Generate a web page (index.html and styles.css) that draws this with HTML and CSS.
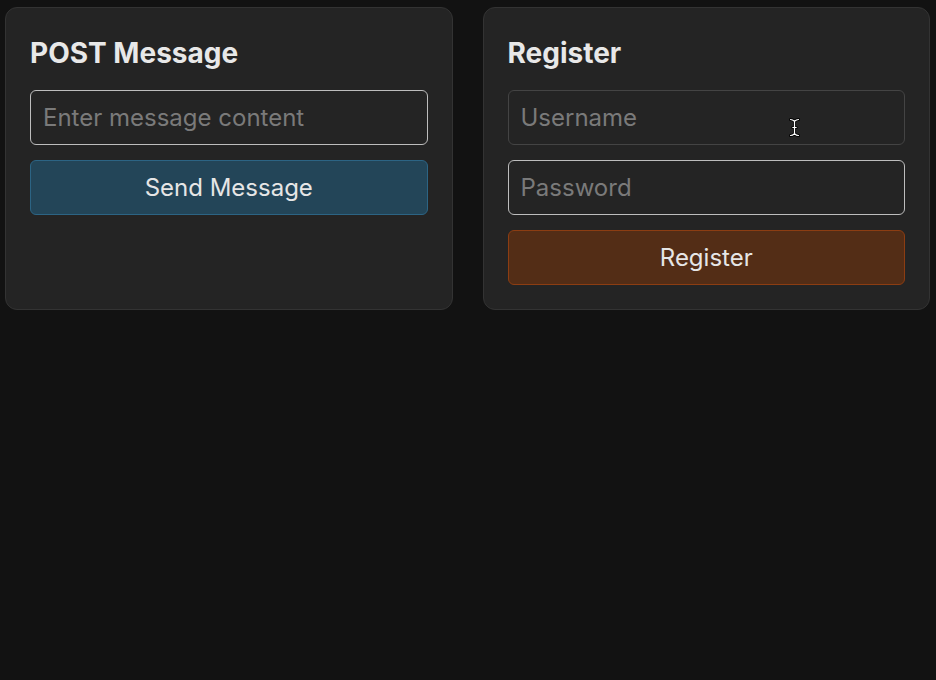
FILE: index.html
```html
<!DOCTYPE html>
<html>
<head>
<meta charset="utf-8">
<link rel="stylesheet" href="styles.css">
</head>
<body>
<div class="grid">
  <section class="card">
    <h2 class="title">POST Message</h2>
    <input class="field field-light" type="text" placeholder="Enter message content">
    <button class="btn btn-blue">Send Message</button>
  </section>
  <section class="card">
    <h2 class="title">Register</h2>
    <div class="field-wrap">
      <input class="field field-dim" type="text" placeholder="Username">
      <svg class="cursor" width="11" height="19" viewBox="0 0 11 19">
        <path d="M1.5 1.5 Q3.5 1.5 5.5 3.2 Q7.5 1.5 9.5 1.5 M5.5 3.2 V15.8 M1.5 17.5 Q3.5 17.5 5.5 15.8 Q7.5 17.5 9.5 17.5 M3.8 9.5 H7.2" fill="none" stroke="#000" stroke-width="3" stroke-linecap="round"/>
        <path d="M1.5 1.5 Q3.5 1.5 5.5 3.2 Q7.5 1.5 9.5 1.5 M5.5 3.2 V15.8 M1.5 17.5 Q3.5 17.5 5.5 15.8 Q7.5 17.5 9.5 17.5 M3.8 9.5 H7.2" fill="none" stroke="#fff" stroke-width="1.2" stroke-linecap="round"/>
      </svg>
    </div>
    <input class="field field-light" type="password" placeholder="Password">
    <button class="btn btn-orange">Register</button>
  </section>
</div>
</body>
</html>
```
FILE: styles.css
```css
html, body {
  margin: 0;
  padding: 0;
  background: #121212;
  height: 100%;
}
body {
  font-family: Inter, "Noto Sans", sans-serif;
  color: #e6e6e6;
}
.grid {
  display: grid;
  grid-template-columns: 1fr 1fr;
  gap: 30px;
  padding: 7px 6px 7px 5px;
}
.card {
  background: #242424;
  border: 1px solid #333;
  border-radius: 12px;
  padding: 24px;
  display: flex;
  flex-direction: column;
  gap: 15px;
}
.title {
  margin: 4px 0 5px 0;
  font-size: 28px;
  font-weight: 700;
  line-height: 34px;
  color: #e8e8e8;
}
.field-wrap {
  position: relative;
  display: flex;
}
.field {
  box-sizing: border-box;
  width: 100%;
  height: 55px;
  margin: 0;
  padding: 0 12px;
  font-family: inherit;
  font-size: 24px;
  color: #e6e6e6;
  background: #242424;
  border-radius: 6px;
  outline: none;
}
.field::placeholder {
  color: #7a7a7a;
}
.field-light {
  border: 1px solid #bdbdbd;
}
.field-dim {
  border: 1px solid #444;
}
.cursor {
  position: absolute;
  left: 281px;
  top: 28px;
}
.btn {
  box-sizing: border-box;
  width: 100%;
  height: 55px;
  margin: 0;
  font-family: inherit;
  font-size: 24px;
  color: #e6e6e6;
  border-radius: 6px;
  cursor: pointer;
}
.btn-blue {
  background: #234558;
  border: 1px solid #2c6484;
}
.btn-orange {
  background: #532d16;
  border: 1px solid #8c3d12;
}
```
